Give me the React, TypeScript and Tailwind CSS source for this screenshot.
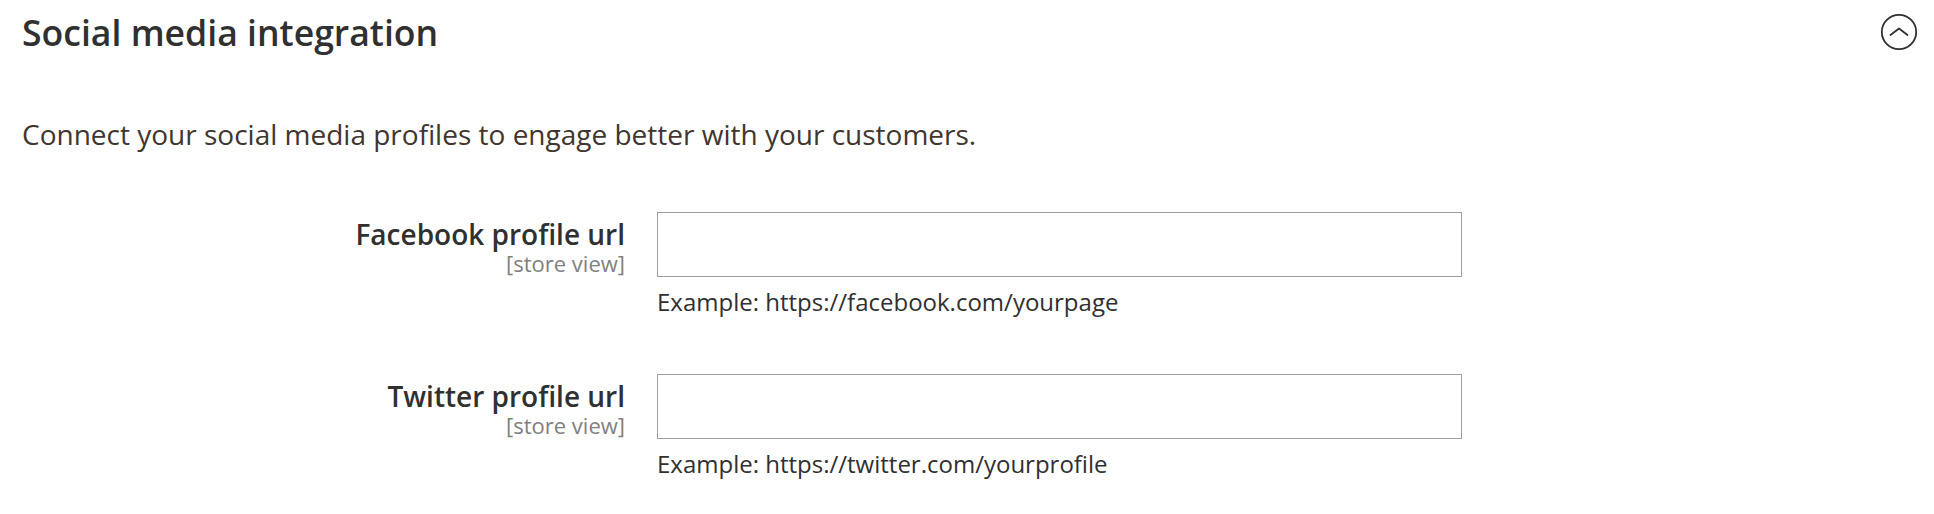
import { ReactNode } from 'react'

const FONT = "font-['Open_Sans',_'Liberation_Sans',_sans-serif]"

function ChevronCircle() {
  return (
    <svg width="38" height="38" viewBox="0 0 38 38" fill="none" aria-hidden="true">
      <circle cx="19" cy="19" r="17.2" stroke="#303030" strokeWidth="1.8" />
      <path d="M10.5 22 L19 15.5 L27.5 22" stroke="#303030" strokeWidth="1.8" strokeLinecap="round" strokeLinejoin="round" />
    </svg>
  )
}

function Field({ label, example }: { label: string; example: ReactNode }) {
  return (
    <div className="flex gap-[32px]">
      <div className="w-[625px] shrink-0 text-right pt-[6px]">
        <div className="text-[28px] leading-[32px] font-semibold text-[#303030]">{label}</div>
        <div className="text-[22px] leading-[26px] text-[#808080]">[store view]</div>
      </div>
      <div className="w-[805px]">
        <input type="text" className="block w-full h-[65px] border border-[#9f9f9f] bg-white outline-none" />
        <div className="mt-[8px] text-[24px] leading-[34px] text-[#303030]">{example}</div>
      </div>
    </div>
  )
}

export default function App() {
  return (
    <div className={`${FONT} w-[1934px] h-[514px] bg-white overflow-hidden`}>
      <div className="flex items-center justify-between pl-[22px] pr-[16px] pt-[8px]">
        <h2 className="text-[35.6px] leading-[48px] font-semibold text-[#303030]">Social media integration</h2>
        <ChevronCircle />
      </div>
      <p className="pl-[22px] mt-[58px] text-[28px] leading-[40px] text-[#41362f]">
        Connect your social media profiles to engage better with your customers.
      </p>
      <div className="mt-[58px] flex flex-col gap-[55px]">
        <Field label="Facebook profile url" example="Example: https://facebook.com/yourpage" />
        <Field label="Twitter profile url" example="Example: https://twitter.com/yourprofile" />
      </div>
    </div>
  )
}
